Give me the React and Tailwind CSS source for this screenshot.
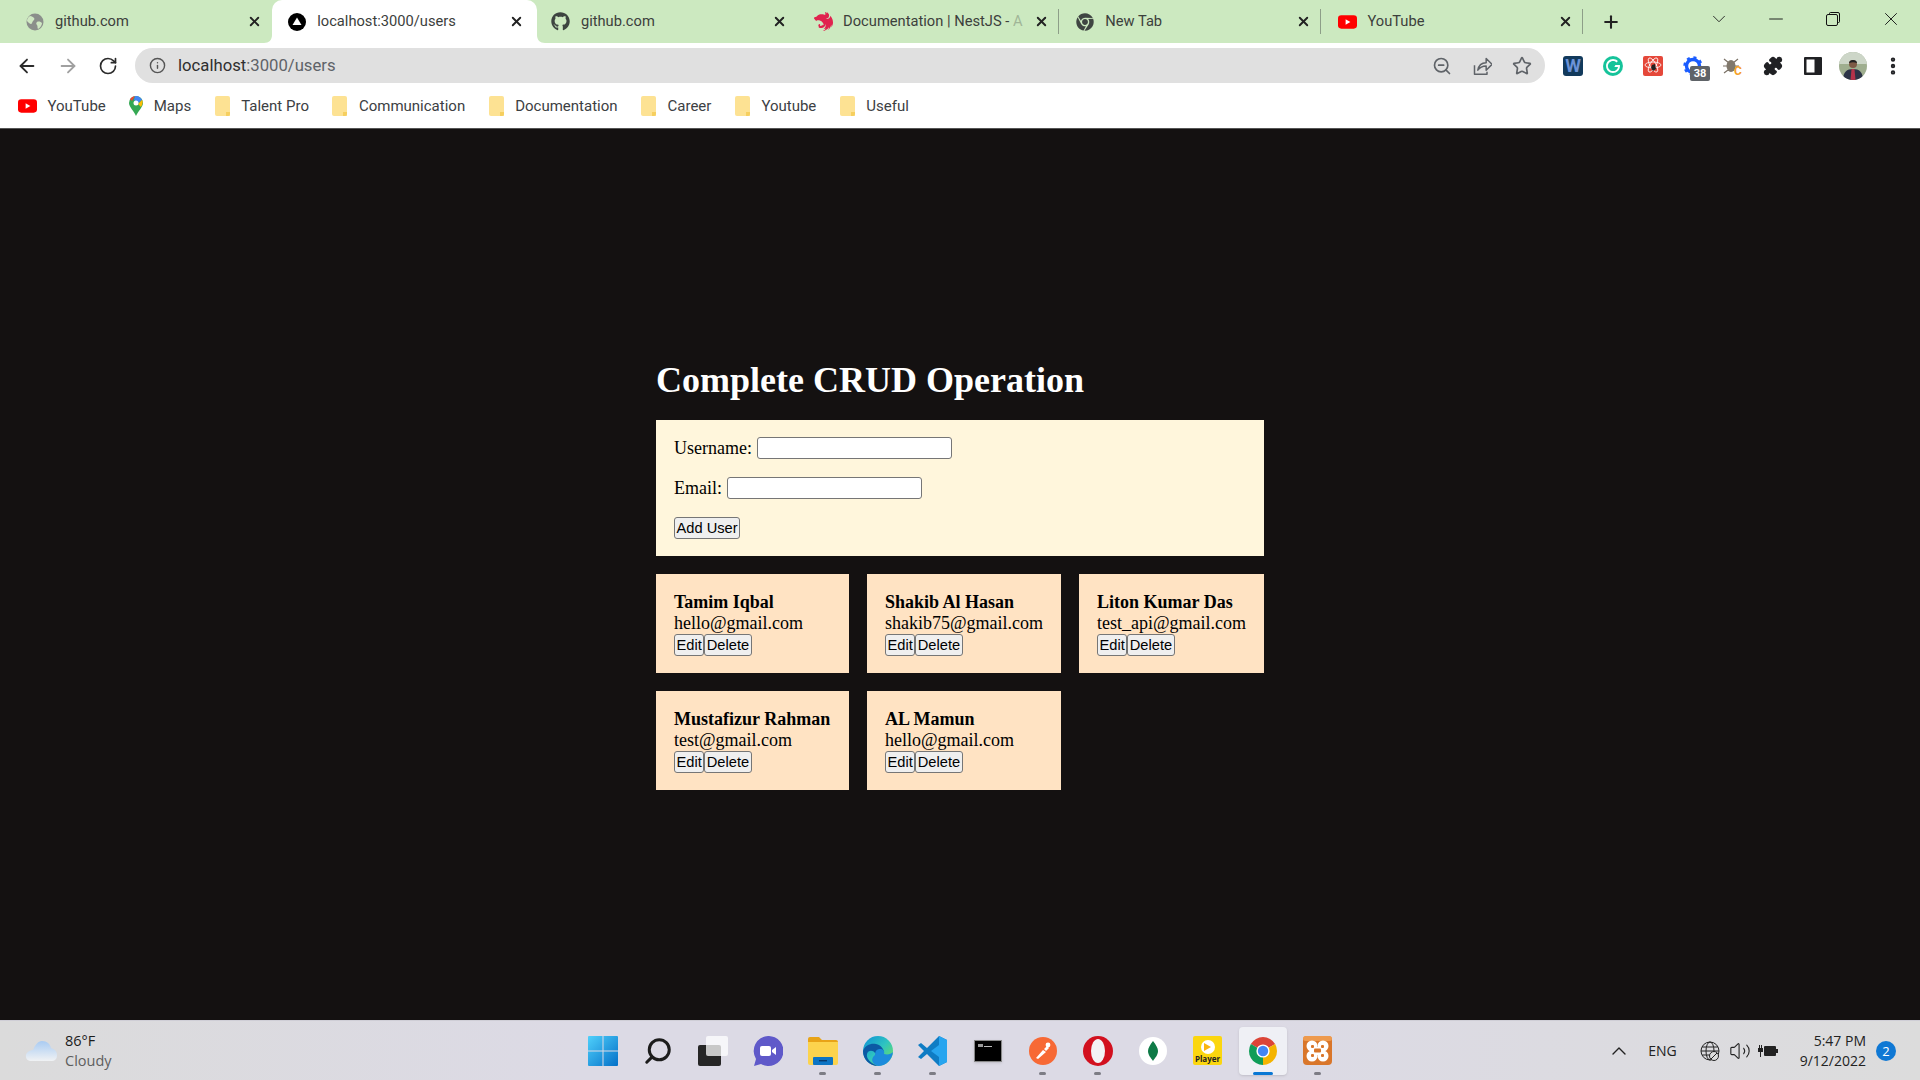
import { ArrowLeft, ArrowRight, RotateCw, Info, ZoomOut, Star, X, Plus, ChevronDown, Minus, Puzzle, EllipsisVertical, Search, ChevronUp, Volume2 } from 'lucide-react'
import { FaGithub, FaChrome } from 'react-icons/fa'
import { SiNestjs, SiGrammarly } from 'react-icons/si'

function YoutubeIcon() {
  return (
    <svg width="19" height="14" viewBox="0 0 20 14">
      <rect width="20" height="14" rx="3.5" fill="#f00" />
      <path d="M8 4l5 3-5 3z" fill="#fff" />
    </svg>
  )
}

function GlobeIcon() {
  return (
    <svg width="18" height="18" viewBox="0 0 18 18">
      <circle cx="9" cy="9" r="8.5" fill="#8b8f8b" />
      <path d="M4 3c2 0 3 1 4 2s0 2-1 3-1 3-2 3-3-2-4-3c0-2 1-4 3-5zM11 9c2-1 4 0 5 1 0 2-2 5-4 6-1-1 0-3-1-4s-1-2 0-3z" fill="#cfe8c2" />
    </svg>
  )
}

function VercelIcon() {
  return (
    <svg width="18" height="18" viewBox="0 0 18 18">
      <circle cx="9" cy="9" r="9" fill="#000" />
      <path d="M9 4.5l4.5 7.5h-9z" fill="#fff" />
    </svg>
  )
}

const tabs = [
  { title: 'github.com', icon: <GlobeIcon /> },
  { title: 'localhost:3000/users', icon: <VercelIcon />, active: true },
  { title: 'github.com', icon: <FaGithub size={19} color="#3d4440" />, later: true },
  { title: 'Documentation | NestJS - ', fade: 'A', icon: <SiNestjs size={19} color="#e0234e" />, sep: true, later: true },
  { title: 'New Tab', icon: <FaChrome size={18} color="#3f4542" />, sep: true, later: true },
  { title: 'YouTube', icon: <YoutubeIcon />, sep: true, later: true },
]

function Tab({ tab }) {
  return (
    <div className={`relative h-full flex items-center pr-[10px] shrink-0 ${tab.later ? 'pl-[16.5px]' : 'pl-[15px]'} ${tab.active ? 'w-[265px] -mr-[2.8px] bg-white rounded-t-[10px] z-10' : 'w-[262.2px]'}`}>
      {tab.active && (
        <>
          <svg className="absolute bottom-0 left-[-8px]" width="8" height="8" viewBox="0 0 8 8"><path d="M8 0v8H0c5 0 8-3 8-8z" fill="#fff" /></svg>
          <svg className="absolute bottom-0 right-[-8px]" width="8" height="8" viewBox="0 0 8 8"><path d="M0 0v8H8C3 8 0 5 0 0z" fill="#fff" /></svg>
        </>
      )}
      <span className="w-[20px] h-[20px] flex items-center justify-center shrink-0">{tab.icon}</span>
      <span className="ml-[10px] flex-1 text-[14.7px] text-[#3c403c] whitespace-nowrap">
        {tab.title}
        {tab.fade && <span className="opacity-30">{tab.fade}</span>}
      </span>
      <X size={15} strokeWidth={3} className={`text-[#222] shrink-0 ${tab.active ? 'mr-[3px]' : ''}`} />
      {tab.sep && <span className="absolute right-0 top-[9px] h-[25px] w-px bg-[#8d9e88]" />}
    </div>
  )
}

function TabStrip() {
  return (
    <div className="h-[43px] bg-[#cce9c0] flex items-stretch pl-[10px]">
      {tabs.map((t, i) => <Tab key={i} tab={t} />)}
      <div className="w-[56px] flex items-center justify-center">
        <Plus size={20} strokeWidth={2.5} className="text-[#222]" />
      </div>
      <div className="w-[57px] flex items-center justify-center pb-[5px] ml-[51px]">
        <ChevronDown size={22} strokeWidth={1} className="text-[#222]" />
      </div>
      <div className="w-[57.5px] flex items-center justify-center pb-[5px]">
        <Minus size={22} strokeWidth={1} className="text-[#111]" />
      </div>
      <div className="w-[57.5px] flex items-center justify-center pb-[5px]">
        <svg width="14" height="14" viewBox="0 0 14 14" fill="none" stroke="#111"><path d="M3.5 2.5v-1a1 1 0 011-1h7.5a1.5 1.5 0 011.5 1.5v7.5a1 1 0 01-1 1h-1" /><rect x=".5" y="2.5" width="11" height="11" rx="1.5" /></svg>
      </div>
      <div className="w-[57.5px] flex items-center justify-center pb-[5px]">
        <X size={22} strokeWidth={1} className="text-[#111]" />
      </div>
    </div>
  )
}

function ExtIcons() {
  return (
    <div className="flex items-center ml-[8px]">
      <span className="w-[40px] flex justify-center">
        <span className="w-[20px] h-[20px] bg-[#123a5c] rounded-[3px] flex items-center justify-center text-[#6c93d8] font-bold text-[18px] leading-none">W</span>
      </span>
      <span className="w-[40px] flex justify-center">
        <span className="w-[20px] h-[20px] bg-[#15c39a] rounded-full flex items-center justify-center"><SiGrammarly size={20} color="#15c39a" className="bg-white rounded-full" /></span>
      </span>
      <span className="w-[40px] flex justify-center">
        <svg width="20" height="20" viewBox="0 0 20 20">
          <rect width="20" height="20" rx="2" fill="#e5483a" />
          <g fill="none" stroke="#fff" strokeWidth=".8"><ellipse cx="10" cy="9" rx="8" ry="3" /><ellipse cx="10" cy="9" rx="8" ry="3" transform="rotate(60 10 9)" /><ellipse cx="10" cy="9" rx="8" ry="3" transform="rotate(120 10 9)" /></g>
          <path d="M9 9l3-1 1 5-3 2-2-3z" fill="#222" />
        </svg>
      </span>
      <span className="relative w-[40px] flex justify-center">
        <svg width="20" height="20" viewBox="0 0 20 20" fill="none" stroke="#1a5cff" strokeWidth="3.4"><circle cx="10" cy="10" r="6.5" /><circle cx="10" cy="10" r="8.5" strokeWidth="2.4" strokeDasharray="3 3.7" /></svg>
        <span className="absolute left-[17px] top-[10px] w-[20px] h-[15px] rounded-[2px] bg-[#5f6368] text-white text-[11px] font-bold leading-[15px] text-center">38</span>
      </span>
      <span className="w-[40px] flex justify-center">
        <svg width="20" height="20" viewBox="0 0 20 20">
          <path d="M1 3l5 4M15 3l-5 4M0 10h5M16 10h-5M1 17l4-3" stroke="#7a7166" strokeWidth="1.2" />
          <ellipse cx="8" cy="10" rx="4.5" ry="6" fill="#80786c" />
          <text x="11" y="19" fontSize="12" fontWeight="700" fill="#f5a02a" fontFamily="Roboto, sans-serif">C</text>
        </svg>
      </span>
      <span className="w-[40px] flex justify-center"><Puzzle size={20} fill="#202124" className="text-[#202124]" /></span>
      <span className="w-[40px] flex justify-center">
        <svg width="18" height="18" viewBox="0 0 18 18"><rect width="18" height="18" rx="1" fill="#202124" /><rect x="2.5" y="2.5" width="8" height="13" fill="#fff" /></svg>
      </span>
      <span className="w-[40px] flex justify-center">
        <svg width="28" height="28" viewBox="0 0 28 28">
          <clipPath id="avatar"><circle cx="14" cy="14" r="14" /></clipPath>
          <g clipPath="url(#avatar)">
            <rect width="28" height="28" fill="#9fae8f" />
            <rect width="28" height="12" fill="#cdd6c8" />
            <path d="M4 28c0-8 4-11 10-11s10 3 10 11z" fill="#2c3347" />
            <path d="M12.5 17h3l1 11h-5z" fill="#b4324a" />
            <circle cx="14" cy="12" r="4" fill="#7e5a45" />
            <path d="M10 11c0-4 8-4 8 0-3-1-5-1-8 0z" fill="#222" />
          </g>
        </svg>
      </span>
      <span className="w-[40px] flex justify-center"><EllipsisVertical size={22} strokeWidth={2.8} className="text-[#202124]" /></span>
    </div>
  )
}

function Toolbar() {
  return (
    <div className="h-[43px] pt-[2px] bg-white flex items-center">
      <div className="w-[135px] flex items-center justify-around pl-[7px] pr-[8px] shrink-0">
        <ArrowLeft size={22} strokeWidth={2} className="text-[#2b2b2b]" />
        <ArrowRight size={22} strokeWidth={2} className="text-[#a0a0a0]" />
        <RotateCw size={20} strokeWidth={2} className="text-[#2b2b2b]" />
      </div>
      <div className="w-[1410px] h-[35px] rounded-full bg-[#e0e0e0] flex items-center pl-[14px] pr-[13px] shrink-0">
        <Info size={17} className="text-[#555]" />
        <span className="ml-[12px] text-[16.7px] text-[#2f2f2f]">localhost<span className="text-[#5f6368]">:3000/users</span></span>
        <div className="ml-auto flex items-center gap-[20px]">
          <ZoomOut size={20} className="text-[#5f6368]" />
          <svg width="20" height="20" viewBox="0 0 24 24" fill="none" stroke="#5f6368" strokeWidth="1.8" strokeLinejoin="round">
            <path d="M3 11v11h15v-3" />
            <path d="M7 17c1-6 5-9 10-9V3l7 7-7 7v-5c-4 0-8 2-10 5z" />
          </svg>
          <Star size={20} className="text-[#5f6368]" />
        </div>
      </div>
      <ExtIcons />
    </div>
  )
}

function FolderIcon() {
  return (
    <svg width="16" height="20" viewBox="0 0 16 20">
      <path d="M2 0h11a2 2 0 012 2v18H2a2 2 0 01-2-2V2a2 2 0 012-2z" fill="#fde293" />
      <path d="M11 20v-4h4v2a2 2 0 01-2 2z" fill="#f6cf5f" />
    </svg>
  )
}

function MapsIcon() {
  return (
    <svg width="14" height="20" viewBox="0 0 14 20">
      <path d="M7 20C5 15 0 11 0 7a7 7 0 0114 0c0 4-5 8-7 13z" fill="#34a853" />
      <path d="M1 3a7 7 0 015-3L3 5z" fill="#ea4335" />
      <path d="M6 0a7 7 0 017 4L9 7 5 4z" fill="#4285f4" />
      <path d="M13 4c1 1 1 4-1 7L9 8z" fill="#fbbc04" />
      <circle cx="7" cy="7" r="2.5" fill="#fff" />
    </svg>
  )
}

const bookmarks = [
  { label: 'YouTube', icon: <YoutubeIcon /> },
  { label: 'Maps', icon: <MapsIcon /> },
  { label: 'Talent Pro', icon: <FolderIcon /> },
  { label: 'Communication', icon: <FolderIcon /> },
  { label: 'Documentation', icon: <FolderIcon /> },
  { label: 'Career', icon: <FolderIcon /> },
  { label: 'Youtube', icon: <FolderIcon /> },
  { label: 'Useful', icon: <FolderIcon /> },
]

function BookmarkBar() {
  return (
    <div className="h-[43px] pb-[2px] bg-white flex items-center pl-[18px] gap-[23.5px] border-b border-[#555]">
      {bookmarks.map(b => (
        <div key={b.label} className="flex items-center gap-[10.5px]">
          {b.icon}
          <span className="text-[15px] text-[#3c4043]">{b.label}</span>
        </div>
      ))}
    </div>
  )
}

const users = [
  { name: 'Tamim Iqbal', email: 'hello@gmail.com' },
  { name: 'Shakib Al Hasan', email: 'shakib75@gmail.com' },
  { name: 'Liton Kumar Das', email: 'test_api@gmail.com' },
  { name: 'Mustafizur Rahman', email: 'test@gmail.com' },
  { name: 'AL Mamun', email: 'hello@gmail.com' },
]

const btn = "h-[22px] px-[1.5px] bg-[#efefef] border border-[#767676] rounded-[3px] text-[14.67px] leading-none text-black font-['Liberation_Sans',Arial,sans-serif]"
const field = "w-[195px] h-[22px] bg-white border border-[#767676] rounded-[3px]"

function UserCard({ user }) {
  return (
    <div className="bg-[#ffe3c3] p-[18px] text-[18px] text-black leading-[21px]">
      <div className="font-bold whitespace-nowrap">{user.name}</div>
      <div className="whitespace-nowrap">{user.email}</div>
      <div className="flex h-[21px]">
        <button className={btn}>Edit</button>
        <button className={btn}>Delete</button>
      </div>
    </div>
  )
}

function CrudPage() {
  return (
    <main className="flex-1 bg-[#141111] font-['Liberation_Serif','Times_New_Roman',serif]">
      <div className="w-[608px] mx-auto pt-[231px]">
        <h1 className="text-[36px] font-bold text-white leading-[40px] mb-[20px]">Complete CRUD Operation</h1>
        <div className="bg-[#fff6dc] px-[18px] pt-[17px] text-[18px] leading-[22px] text-black h-[136px]">
          <div className="flex items-center gap-[5px] mb-[18px]">
            <label>Username:</label>
            <input className={field} />
          </div>
          <div className="flex items-center gap-[5px] mb-[17px]">
            <label>Email:</label>
            <input className={field} />
          </div>
          <button className={btn}>Add User</button>
        </div>
        <div className="grid grid-cols-[193px_194px_185px] gap-[18px] mt-[18px]">
          {users.map(u => <UserCard key={u.name} user={u} />)}
        </div>
      </div>
    </main>
  )
}

function WinIcon() {
  return (
    <svg width="30" height="30" viewBox="0 0 30 30">
      <defs><linearGradient id="win" x1="0" y1="0" x2="1" y2="1"><stop offset="0" stopColor="#4fd0fb" /><stop offset="1" stopColor="#0470c8" /></linearGradient></defs>
      <path d="M1 0h13.5v14.5H0V1a1 1 0 011-1zM15.5 0H29a1 1 0 011 1v13.5H15.5zM0 15.5h14.5V30H1a1 1 0 01-1-1zM15.5 15.5H30V29a1 1 0 01-1 1H15.5z" fill="url(#win)" />
    </svg>
  )
}

function TaskView() {
  return (
    <svg width="30" height="30" viewBox="0 0 30 30">
      <rect x="0" y="9" width="23" height="21" rx="2" fill="#262626" />
      <rect x="8" y="0" width="22" height="20" rx="2" fill="#fff" fillOpacity=".75" />
    </svg>
  )
}

function ChatIcon() {
  return (
    <svg width="30" height="30" viewBox="0 0 30 30">
      <path d="M15 0a15 15 0 11-7 28l-7 2 2-7A15 15 0 0115 0z" fill="#5f59c9" />
      <rect x="7" y="10" width="11" height="10" rx="2" fill="#fff" />
      <path d="M19 14l4-3v8l-4-3z" fill="#fff" />
    </svg>
  )
}

function ExplorerIcon() {
  return (
    <svg width="30" height="28" viewBox="0 0 30 28">
      <path d="M0 2a2 2 0 012-2h9l3 3h14a2 2 0 012 2v3H0z" fill="#e8a317" />
      <path d="M0 5h30v21a2 2 0 01-2 2H2a2 2 0 01-2-2z" fill="#fcd34d" />
      <rect x="5" y="20" width="20" height="8" rx="1" fill="#0c74c4" />
      <rect x="11" y="23" width="8" height="1.4" fill="#063a6e" />
    </svg>
  )
}

function EdgeIcon() {
  return (
    <svg width="30" height="30" viewBox="0 0 30 30">
      <defs><linearGradient id="edge" x1="0" y1="0" x2="1" y2="1"><stop offset="0" stopColor="#0d8fd8" /><stop offset=".5" stopColor="#2fc4c0" /><stop offset="1" stopColor="#7be54a" /></linearGradient></defs>
      <circle cx="15" cy="15" r="15" fill="url(#edge)" />
      <path d="M0 15c2-6 8-8 13-7 5 1 8 5 8 9H12c-2-3-7-3-8 1-1 4 3 9 11 12C6 30 0 23 0 15z" fill="#0c59a4" />
      <path d="M12 19c0-4 2-6 5-6s5 2 4 5c4 1 7 0 9-2-1 8-7 14-15 14-6-2-8-7-3-11z" fill="#1c8bdc" />
    </svg>
  )
}

function VscodeIcon() {
  return (
    <svg width="30" height="30" viewBox="0 0 30 30">
      <path d="M21 0l8 4v22l-8 4L9 18l-6 5-3-2 6-6-6-6 3-2 6 5z" fill="#0f7cc4" />
      <path d="M21 0l8 4v22l-8 4V21l-8-6 8-6z" fill="#27a5ef" />
    </svg>
  )
}

function TerminalIcon() {
  return (
    <div className="w-[28px] h-[22px] bg-black border border-[#888] shadow-sm flex pl-[3px] pt-[3px] gap-[1px]">
      <span className="block w-[5px] h-[3px] bg-[#999]" />
      <span className="block w-[8px] h-px mt-[2px] bg-[#bbb]" />
    </div>
  )
}

function PostmanIcon() {
  return (
    <svg width="28" height="28" viewBox="0 0 28 28">
      <circle cx="14" cy="14" r="14" fill="#f76935" />
      <path d="M7 21l7-8 3 2-8 7zM15 12l3-3 2 2-3 3z" fill="#fff" />
      <circle cx="19" cy="8" r="2.4" fill="#fff" />
    </svg>
  )
}

function OperaIcon() {
  return (
    <svg width="30" height="30" viewBox="0 0 30 30">
      <circle cx="15" cy="15" r="15" fill="#d2101e" />
      <ellipse cx="15" cy="15" rx="7" ry="12" fill="#f3f2f5" />
    </svg>
  )
}

function MongoIcon() {
  return (
    <svg width="28" height="28" viewBox="0 0 28 28">
      <circle cx="14" cy="14" r="14" fill="#fff" />
      <path d="M14 4c3 4 5 7 5 10 0 4-3 7-5 10-2-3-5-6-5-10 0-3 2-6 5-10z" fill="#0e7a46" />
    </svg>
  )
}

function PlayerIcon() {
  return (
    <div className="w-[29px] h-[29px] bg-[#fbd60f] rounded-[2px] flex flex-col items-center pt-[4px]">
      <span className="w-[14px] h-[14px] rounded-full bg-white flex items-center justify-center">
        <svg width="7" height="8" viewBox="0 0 7 8"><path d="M0 0l7 4-7 4z" fill="#fbb60f" /></svg>
      </span>
      <span className="text-[8px] font-bold leading-[10px] text-[#222]">Player</span>
    </div>
  )
}

function ChromeIcon() {
  return (
    <svg width="28" height="28" viewBox="-14 -14 28 28">
      <path d="M0 0L-12.12-7A14 14 0 0112.12-7z" fill="#db4437" />
      <path d="M0 0L12.12-7A14 14 0 010 14z" fill="#f4b400" />
      <path d="M0 0L0 14A14 14 0 01-12.12-7z" fill="#0f9d58" />
      <circle r="6.6" fill="#fff" />
      <circle r="5.2" fill="#4285f4" />
    </svg>
  )
}

function XamppIcon() {
  return (
    <svg width="29" height="29" viewBox="0 0 29 29">
      <rect width="29" height="29" rx="4" fill="#d9762a" />
      <rect width="29" height="5" rx="2.5" fill="#ee9a4d" />
      <g fill="#fff">
        <circle cx="9" cy="10" r="5.5" />
        <circle cx="20" cy="10" r="5.5" />
        <circle cx="9" cy="20" r="5.5" />
        <circle cx="20" cy="20" r="5.5" />
        <rect x="9" y="11" width="11" height="8" />
      </g>
      <g fill="#d9762a">
        <rect x="8" y="9" width="3" height="3" rx="1" />
        <rect x="18" y="9" width="3" height="3" rx="1" />
        <rect x="8" y="18" width="3" height="3" rx="1" />
        <rect x="18" y="18" width="3" height="3" rx="1" />
        <rect x="11" y="12.5" width="7" height="4" rx="1" />
      </g>
    </svg>
  )
}

const apps = [
  { icon: <WinIcon /> },
  { icon: <Search size={30} strokeWidth={2.4} className="text-[#1c1c1c] -scale-x-100" /> },
  { icon: <TaskView /> },
  { icon: <ChatIcon /> },
  { icon: <ExplorerIcon />, running: true },
  { icon: <EdgeIcon />, running: true },
  { icon: <VscodeIcon />, running: true },
  { icon: <TerminalIcon /> },
  { icon: <PostmanIcon />, running: true },
  { icon: <OperaIcon />, running: true },
  { icon: <MongoIcon /> },
  { icon: <PlayerIcon /> },
  { icon: <ChromeIcon />, active: true },
  { icon: <XamppIcon />, running: true },
]

function AppSlot({ app }) {
  return (
    <div className="relative w-[55px] h-[48px] flex items-center justify-center">
      {app.active && <span className="absolute inset-y-0 left-[3.5px] w-[48px] bg-[#eff0f5] rounded-[4px] shadow-sm" />}
      <span className="relative flex">{app.icon}</span>
      {app.running && <span className="absolute bottom-[0px] left-1/2 -ml-[3.5px] w-[7px] h-[3px] rounded-full bg-[#7c7c84]" />}
      {app.active && <span className="absolute bottom-[0px] left-1/2 -ml-[10px] w-[20px] h-[3px] rounded-full bg-[#0a78d4]" />}
    </div>
  )
}

function Taskbar() {
  return (
    <div className="h-[60px] bg-[linear-gradient(90deg,#dbdbdb,#dcdae5_30%,#dcdae5_65%,#dcdcdc)] flex items-center font-['Open_Sans',sans-serif] border-t border-[#cfced6]">
      <div className="w-[575px] shrink-0 flex items-center pl-[25px] gap-[8px]">
        <svg width="32" height="20" viewBox="0 0 32 20">
          <defs><linearGradient id="cloud" x1="0" y1="0" x2="0" y2="1"><stop offset="0" stopColor="#a9cbf2" /><stop offset="1" stopColor="#f0f2f4" /></linearGradient></defs>
          <path d="M5 20a5 5 0 01-2-9c1-1 3-2 5-2 2-5 5-9 9-9 5 0 8 3 9 7 3 1 6 3 6 7 0 4-2 6-6 6z" fill="url(#cloud)" />
        </svg>
        <div className="text-[14.5px] leading-[20px]">
          <div className="text-[#1c1c1c]">86°F</div>
          <div className="text-[#5e5e5e]">Cloudy</div>
        </div>
      </div>
      <div className="flex items-center">
        {apps.map((a, i) => <AppSlot key={i} app={a} />)}
      </div>
      <div className="flex-1 flex items-center justify-end pr-[24px]">
        <ChevronUp size={24} strokeWidth={1.4} className="text-[#222]" />
        <span className="ml-[17px] text-[14px] text-[#222]">ENG</span>
        <svg className="ml-[23px]" width="20" height="20" viewBox="0 0 20 20" fill="none" stroke="#222"><circle cx="10" cy="10" r="9" /><ellipse cx="10" cy="10" rx="4" ry="9" /><path d="M1 10h18M2 6h16M2 14h16" /><circle cx="14" cy="15" r="4.5" fill="#dcdcdc" /><path d="M11 18l6-6" /></svg>
        <Volume2 className="ml-[9px] text-[#222]" size={22} strokeWidth={1.2} />
        <svg className="ml-[7px]" width="20" height="16" viewBox="0 0 20 16"><rect x="6" y="3" width="12" height="10" rx="1" fill="#222" /><rect x="18" y="6" width="2" height="4" fill="#222" /><path d="M0 5h5v4H0zM1 2h1v3H1zM3 2h1v3H3zM2 9h1v5H2z" fill="#222" /></svg>
        <div className="ml-[22px] text-right text-[14px] leading-[20px] text-[#222]">
          <div>5:47 PM</div>
          <div>9/12/2022</div>
        </div>
        <span className="ml-[10px] w-[20px] h-[20px] rounded-full bg-[#0f78d4] text-white text-[13px] leading-[20px] text-center">2</span>
      </div>
    </div>
  )
}

export default function App() {
  return (
    <div className="w-[1920px] h-[1080px] flex flex-col overflow-hidden font-['Roboto',sans-serif]">
      <TabStrip />
      <Toolbar />
      <BookmarkBar />
      <CrudPage />
      <Taskbar />
    </div>
  )
}
